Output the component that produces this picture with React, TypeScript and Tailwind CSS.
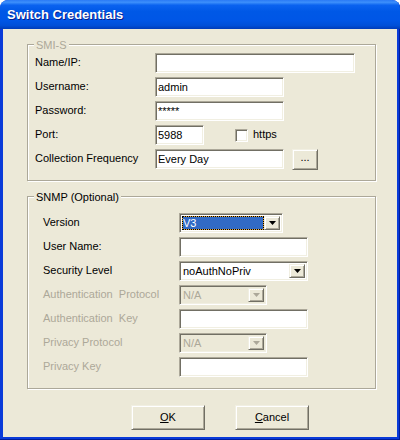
import type { ReactNode } from "react";

const sunken =
  "border border-t-[#aca899] border-l-[#aca899] border-b-white border-r-white shadow-[inset_1px_1px_0_#716f64,inset_-1px_-1px_0_#f1efe2]";
const raised =
  "border border-t-[#f1efe2] border-l-[#f1efe2] border-b-[#716f64] border-r-[#716f64] shadow-[inset_1px_1px_0_#ffffff,inset_-1px_-1px_0_#aca899] bg-[#ece9d8]";
const etched = "border border-[#aca899] shadow-[1px_1px_0_#ffffff,inset_1px_1px_0_#ffffff]";

const TextBox = ({ w, value = "" }: { w: string; value?: string }) => (
  <div className={`${sunken} ${w} flex h-[20px] items-center bg-white pl-[2px]`}>{value}</div>
);

const Arrow = ({ disabled }: { disabled?: boolean }) => (
  <svg width="7" height="4" viewBox="0 0 7 4">
    <polygon points="0,0 7,0 3.5,4" fill={disabled ? "#aca899" : "#000"} />
  </svg>
);

const Select = ({
  w,
  value,
  disabled,
  focused,
}: {
  w: string;
  value: string;
  disabled?: boolean;
  focused?: boolean;
}) => (
  <div className={`${sunken} ${w} flex h-[20px] p-[2px] ${disabled ? "bg-[#ece9d8]" : "bg-white"}`}>
    {focused ? (
      <div className="flex flex-1 bg-[#e8a838]">
        <div className="flex flex-1 items-center border border-dotted border-black bg-[#316ac5] bg-clip-padding text-white">
          {value}
        </div>
      </div>
    ) : (
      <div className={`flex flex-1 items-center pl-[1px] ${disabled ? "text-[#aca899]" : ""}`}>{value}</div>
    )}
    <div className={`${raised} flex w-[16px] items-center justify-center`}>
      <Arrow disabled={disabled} />
    </div>
  </div>
);

const Row = ({ label, lw, disabled, children }: { label: string; lw: string; disabled?: boolean; children: ReactNode }) => (
  <div className="flex h-[20px] items-center">
    <div className={`${lw} -mt-[2px] ${disabled ? "text-[#aca899]" : ""}`}>{label}</div>
    {children}
  </div>
);

const Group = ({ title, disabled, className, children }: { title: string; disabled?: boolean; className: string; children: ReactNode }) => (
  <div className={`${etched} relative w-[349px] ${className}`}>
    <span className={`absolute -top-[8px] left-[6px] bg-[#ece9d8] px-[2px] ${disabled ? "text-[#aca899]" : ""}`}>
      {title}
    </span>
    <div className="flex flex-col gap-[4px]">{children}</div>
  </div>
);

const Button = ({ children }: { children: ReactNode }) => (
  <div className={`${raised} flex h-[25px] w-[74px] items-center justify-center`}>{children}</div>
);

export default function App() {
  return (
    <div className="h-[440px] w-[400px] bg-white font-['Liberation_Sans',Arial,sans-serif] text-[11px] text-black">
      <div className="flex h-full flex-col rounded-t-[8px] bg-[#0a3bd9] shadow-[inset_-1px_-1px_0_#001e9c]">
        <div className="flex h-[29px] items-center rounded-t-[8px] bg-[linear-gradient(to_bottom,#2a7af5_0%,#3d8ffb_8%,#0a62ef_18%,#0058e6_40%,#0056e6_70%,#004fd8_88%,#003cb8_100%)] pl-[7px]">
          <span className="text-[13px] font-bold text-white [text-shadow:1px_1px_0_#0a1d8a]">Switch Credentials</span>
        </div>
        <div className="flex flex-1 px-[3px] pb-[3px]">
          <div className="flex-1 bg-[#ece9d8] pl-[24px] pt-[15px]">
            <Group title="SMI-S" disabled className="pb-[11px] pl-[7px] pt-[8px]">
              <Row label="Name/IP:" lw="w-[120px]">
                <TextBox w="w-[200px]" />
              </Row>
              <Row label="Username:" lw="w-[120px]">
                <TextBox w="w-[129px]" value="admin" />
              </Row>
              <Row label="Password:" lw="w-[120px]">
                <TextBox w="w-[129px]" value="*****" />
              </Row>
              <Row label="Port:" lw="w-[120px]">
                <TextBox w="w-[49px]" value="5988" />
                <div className={`${sunken} ml-[31px] h-[13px] w-[13px] bg-white`} />
                <span className="ml-[5px] -mt-[2px]">https</span>
              </Row>
              <Row label="Collection Frequency" lw="w-[120px]">
                <TextBox w="w-[129px]" value="Every Day" />
                <div className={`${raised} ml-[8px] flex h-[21px] w-[26px] items-center justify-center pb-[4px]`}>...</div>
              </Row>
            </Group>
            <Group title="SNMP (Optional)" className="mt-[15px] pb-[11px] pl-[15px] pt-[16px]">
              <Row label="Version" lw="w-[136px]">
                <Select w="w-[104px]" value="V3" focused />
              </Row>
              <Row label="User Name:" lw="w-[136px]">
                <TextBox w="w-[129px]" />
              </Row>
              <Row label="Security Level" lw="w-[136px]">
                <Select w="w-[129px]" value="noAuthNoPriv" />
              </Row>
              <Row label="Authentication  Protocol" lw="w-[136px] whitespace-pre" disabled>
                <Select w="w-[88px]" value="N/A" disabled />
              </Row>
              <Row label="Authentication  Key" lw="w-[136px] whitespace-pre" disabled>
                <TextBox w="w-[129px]" />
              </Row>
              <Row label="Privacy Protocol" lw="w-[136px]" disabled>
                <Select w="w-[88px]" value="N/A" disabled />
              </Row>
              <Row label="Privacy Key" lw="w-[136px]" disabled>
                <TextBox w="w-[129px]" />
              </Row>
            </Group>
            <div className="mt-[16px] flex gap-[30px] pl-[104px]">
              <Button>
                <span className="underline">O</span>K
              </Button>
              <Button>
                <span className="underline">C</span>ancel
              </Button>
            </div>
          </div>
        </div>
      </div>
    </div>
  );
}
